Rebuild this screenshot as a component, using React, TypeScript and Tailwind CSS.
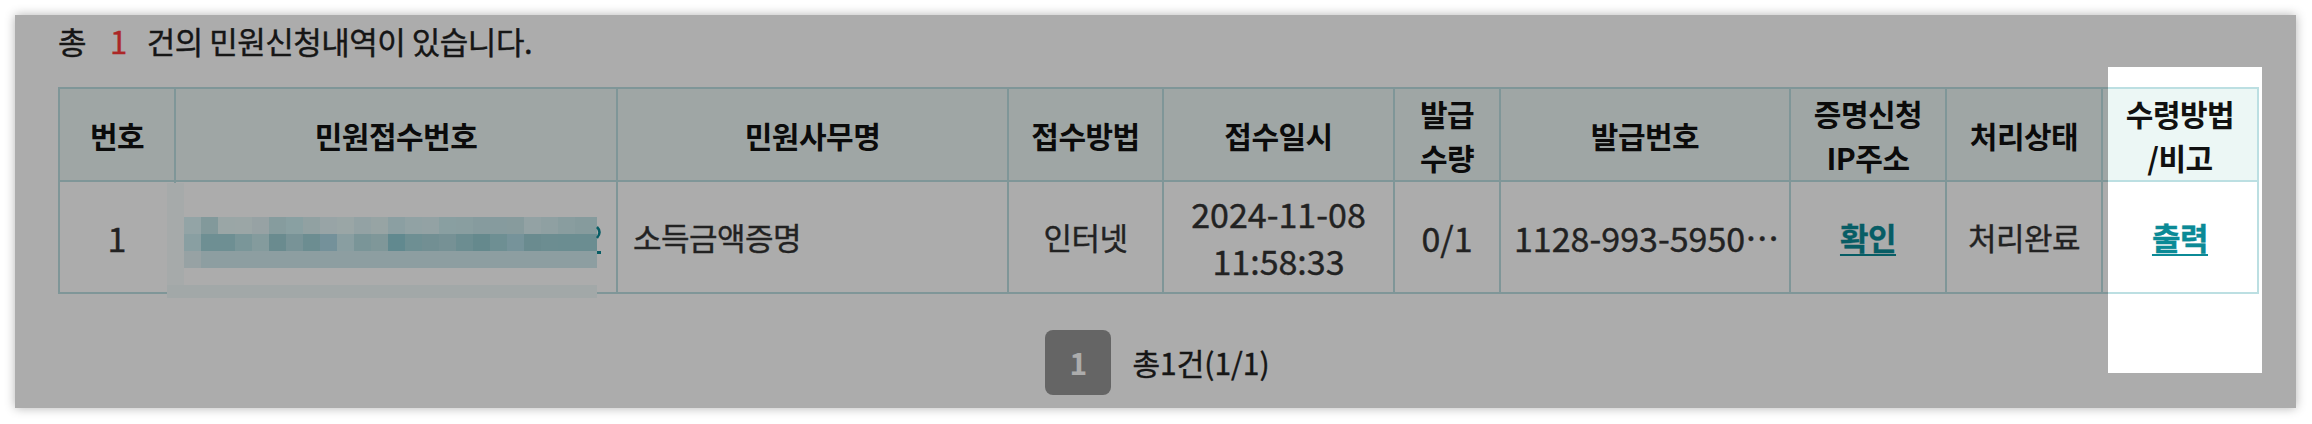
import React from 'react';

// the screenshot is dimmed by a tour overlay; colours below are the undimmed ones
const DIM = 0.675;

function lift(hex: string) {
  const n = parseInt(hex.slice(1), 16);
  const c = [n >> 16, (n >> 8) & 255, n & 255].map((v) => Math.min(255, Math.round(v / DIM)));
  return `rgb(${c.join(',')})`;
}

// pixelated (blurred) receipt number, colours as seen through the overlay
const ROW_A = [
  '#93a5a6', '#82999b', '#9aa6a6', '#9ba7a6', '#97a3a5', '#869c9e', '#8aa0a2', '#91a1a2', '#98a4a6',
  '#9aa6a7', '#94a3a4', '#97a5a5', '#8b9fa2', '#91a3a4', '#93a3a4', '#8a9fa1', '#8a9ea0', '#869b9e',
  '#869b9e', '#879b9d', '#94a3a4', '#8fa0a2', '#899d9f', '#869b9d', '#869b9d',
];
const ROW_B = [
  '#8a9fa2', '#6f8f93', '#6f8f93', '#7a9699', '#849b9d', '#6a8c90', '#789497', '#6d8e92', '#75929a',
  '#8a9ea1', '#7b9598', '#7f9799', '#618a8f', '#6f8f93', '#738f93', '#769295', '#6d8e92', '#658a8e',
  '#6f8f93', '#76939a', '#6a8c90', '#6d8e92', '#6b8d91', '#6b8d91', '#6b8d91',
];
const ROW_C = ['#97a3a4', ...Array(24).fill('#8e9ea1')];

function Mosaic() {
  const rows = [ROW_A, ROW_B, ROW_C];
  return (
    <svg className="absolute left-[109px] top-[96px]" width="436" height="115" viewBox="0 0 436 115">
      <rect x="0" y="0" width="430" height="115" fill="#ffffff" />
      <rect x="0" y="0" width="17" height="102" fill={lift('#a6aaab')} />
      <rect x="0" y="102" width="430" height="13" fill={lift('#a3a8a8')} />
      {rows.map((row, r) =>
        row.map((c, i) => (
          <rect
            key={`${r}-${i}`}
            x={17 + i * 17}
            y={34 + r * 17}
            width={i === 24 ? 5 : 17}
            height="17"
            fill={lift(c)}
          />
        ))
      )}
      <path d="M430 44 q5 5 0 11" stroke="#0b8a96" strokeWidth="2.5" fill="none" />
      <rect x="430" y="68" width="4" height="3" fill="#0b8a96" />
    </svg>
  );
}

const COLS = [
  'w-[116px]', 'w-[442px]', 'w-[391px]', 'w-[155px]', 'w-[231px]',
  'w-[106px]', 'w-[290px]', 'w-[156px]', 'w-[156px]', 'w-[156px]',
];

const HEAD = [
  ['번호'],
  ['민원접수번호'],
  ['민원사무명'],
  ['접수방법'],
  ['접수일시'],
  ['발급', '수량'],
  ['발급번호'],
  ['증명신청', 'IP주소'],
  ['처리상태'],
  ['수령방법', '/비고'],
];

const cell = 'border-2 border-[#bcdfe2]';
const ko = 'text-[31px] tracking-[-0.5px]';
const medium = '[-webkit-text-stroke:0.4px_currentColor]';
const num = 'text-[34px]';
const link = 'font-bold text-[#0b8a96] underline decoration-2 underline-offset-[4px]';

export default function App() {
  return (
    <div className="h-[424px] w-[2312px] bg-white pl-[15px] pt-[15px] font-['Noto_Sans_CJK_KR',sans-serif]">
      <div className="relative h-[393px] w-[2281px] overflow-hidden bg-white pl-[43px] pt-[6px] shadow-[0_0_10px_rgba(0,0,0,0.3)]">
        {/* Count */}
        <p className={`h-[40px] leading-[40px] text-[#222] ${ko} ${medium}`}>
          총<span className="ml-[24px] mr-[20px] text-[#ff3a3a]">1</span>건의 민원신청내역이 있습니다.
        </p>

        {/* Table */}
        <div className="relative mt-[26px] w-[2199px]">
          <table className="w-[2199px] table-fixed border-collapse">
            <colgroup>
              {COLS.map((w, i) => (
                <col key={i} className={w} />
              ))}
            </colgroup>
            <thead>
              <tr className="h-[93px] bg-[#ecf7f5]">
                {HEAD.map((lines, i) => (
                  <th
                    key={i}
                    className={`${cell} p-0 text-center text-[30px] font-bold leading-[44px] tracking-[-0.5px] text-[#111]`}
                  >
                    {lines.map((l, j) => (
                      <div key={j}>{l}</div>
                    ))}
                  </th>
                ))}
              </tr>
            </thead>
            <tbody className="text-[#333]">
              <tr className={`h-[112px] ${medium}`}>
                <td className={`${cell} ${num} text-center`}>1</td>
                <td className={cell}></td>
                <td className={`${cell} ${ko} pl-[15px] text-left`}>소득금액증명</td>
                <td className={`${cell} ${ko} text-center`}>인터넷</td>
                <td className={`${cell} ${num} text-center leading-[47px]`}>
                  2024-11-08
                  <br />
                  11:58:33
                </td>
                <td className={`${cell} ${num} text-center`}>0/1</td>
                <td className={`${cell} ${num} truncate pl-[13px] pr-[6px] text-left`}>1128-993-5950-4417</td>
                <td className={`${cell} ${ko} text-center`}>
                  <a className={link}>확인</a>
                </td>
                <td className={`${cell} ${ko} text-center`}>처리완료</td>
                <td className={`${cell} ${ko} text-center`}>
                  <a className={link}>출력</a>
                </td>
              </tr>
            </tbody>
          </table>
          <Mosaic />
        </div>

        {/* Pagination */}
        <div className="mt-[36px] flex w-[2199px] items-center justify-center gap-[21px]">
          <span className="flex h-[65px] w-[66px] items-center justify-center rounded-[8px] bg-[#969696] text-[30px] font-bold text-white">
            1
          </span>
          <span className={`text-[30px] text-[#222] ${medium}`}>총1건(1/1)</span>
        </div>

        {/* Tour spotlight on the last column */}
        <div className="pointer-events-none absolute left-[2093px] top-[52px] h-[306px] w-[154px] shadow-[0_0_0_9999px_rgba(0,0,0,0.325)]" />
      </div>
    </div>
  );
}
